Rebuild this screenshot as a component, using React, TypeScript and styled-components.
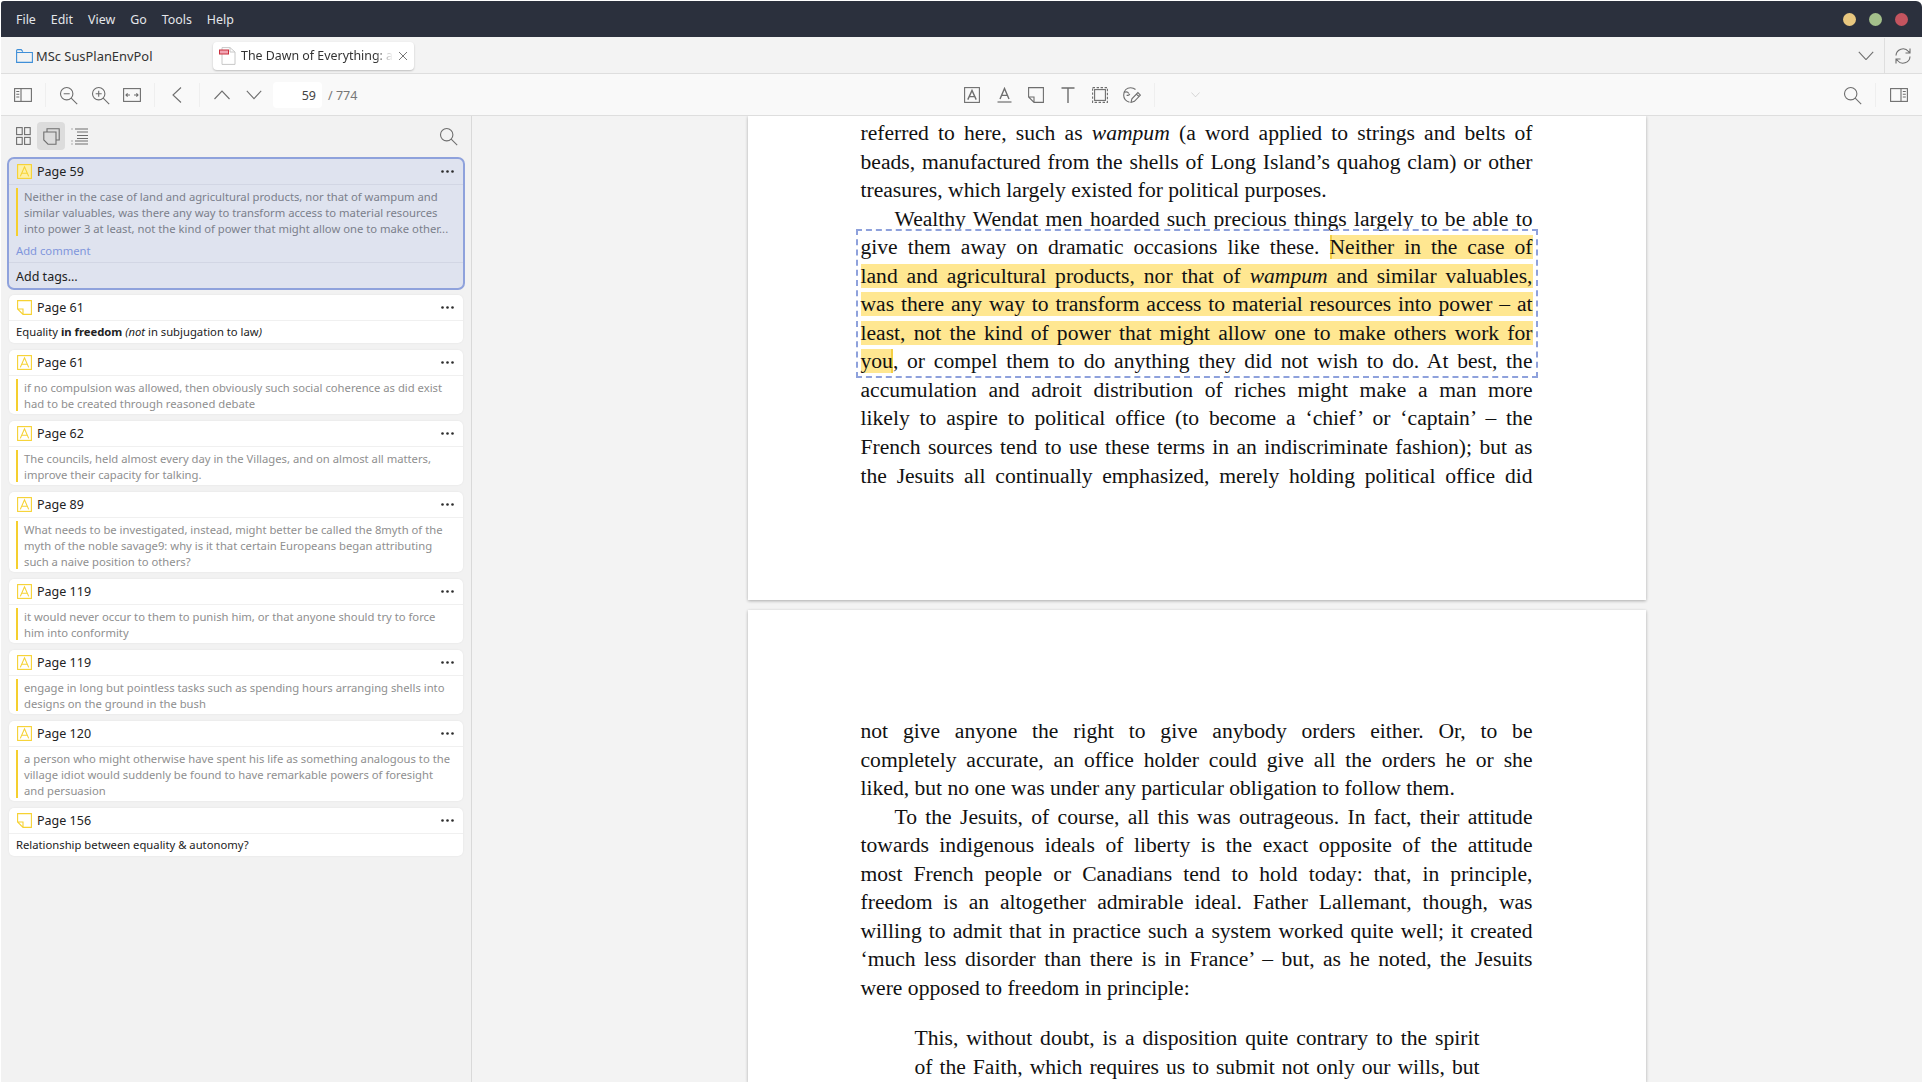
import React from "react";
import styled, { createGlobalStyle } from "styled-components";

const GlobalStyle = createGlobalStyle`
	html, body {
		margin: 0;
		padding: 0;
		height: 100%;
		overflow: hidden;
		background: #fff;
	}
	* {
		box-sizing: border-box;
	}
`;

const Window = styled.div`
	width: 1922px;
	height: 1082px;
	display: flex;
	flex-direction: column;
	padding: 1px 0 0 1px;
	font-family: "Noto Sans", sans-serif;
	color: #222;
	overflow: hidden;
`;

const MenuBar = styled.div`
	height: 36px;
	flex: none;
	display: flex;
	align-items: center;
	justify-content: space-between;
	padding: 0 14px 0 15px;
	background: #2b303d;
	border-radius: 3px 6px 0 0;
`;

const MenuItems = styled.div`
	display: flex;
	gap: 15px;
`;

const MenuItem = styled.span`
	font-size: 12.4px;
	color: #e4e6ea;
`;

const Lights = styled.div`
	display: flex;
	gap: 13px;
`;

const Light = styled.span<{ $color: string }>`
	width: 13px;
	height: 13px;
	border-radius: 50%;
	background: ${p => p.$color};
`;

const TabBar = styled.div`
	height: 37px;
	flex: none;
	display: flex;
	align-items: center;
	padding-top: 1px;
	background: #f3f3f3;
	border-bottom: 1px solid #dedede;
`;

const LibraryTab = styled.div`
	width: 212px;
	flex: none;
	display: flex;
	align-items: center;
	gap: 3px;
	padding-left: 15px;
	font-size: 12.9px;
	color: #333;
`;

const ActiveTab = styled.div`
	width: 201px;
	height: 28px;
	flex: none;
	display: flex;
	align-items: center;
	gap: 5px;
	padding: 0 9px 0 6px;
	background: #fff;
	border-radius: 4px;
	box-shadow: 0 1px 2px rgba(0, 0, 0, 0.22);
	font-size: 12.4px;
	color: #333;
`;

const TabTitle = styled.span`
	flex: 1;
	white-space: nowrap;
	-webkit-mask-image: linear-gradient(to right, #000 88%, transparent 100%);
	mask-image: linear-gradient(to right, #000 88%, transparent 100%);
`;

const TabEnd = styled.div`
	margin-left: auto;
	margin-right: 1px;
	height: 100%;
	display: flex;
	align-items: center;
`;

const TabEndButton = styled.div<{ $divided?: boolean }>`
	width: 37px;
	height: 100%;
	display: flex;
	align-items: center;
	justify-content: center;
	${p => p.$divided && "border-left: 1px solid #dedede;"}
`;

const Toolbar = styled.div`
	height: 42px;
	flex: none;
	display: grid;
	grid-template-columns: 955px auto 1fr;
	align-items: center;
	padding-top: 1px;
	background: #f9f9f9;
	border-bottom: 1px solid #dedede;
`;

const ToolGroup = styled.div<{ $end?: boolean }>`
	display: flex;
	align-items: center;
	${p => (p.$end ? "justify-content: flex-end; padding-right: 7px;" : "")}
`;

const LeftTools = styled(ToolGroup)`
	padding-left: 6px;
`;

const ToolButton = styled.div`
	width: 32px;
	height: 28px;
	display: flex;
	align-items: center;
	justify-content: center;
`;

const ToolSeparator = styled.span`
	width: 1px;
	height: 24px;
	margin: 0 6px;
	background: #efefef;
`;

const RightSeparator = styled(ToolSeparator)`
	margin: 0 7px;
`;

const PageInput = styled.div`
	width: 49px;
	height: 26px;
	margin-left: 3px;
	padding-right: 6px;
	display: flex;
	align-items: center;
	justify-content: flex-end;
	background: #fff;
	border-radius: 4px;
	font-size: 12.5px;
	color: #444;
`;

const PageTotal = styled.span`
	margin-left: 6px;
	font-size: 12.5px;
	color: #777;
`;

const ColorDropdown = styled.div`
	width: 49px;
	display: flex;
	justify-content: flex-end;
	padding-right: 10px;
`;

const Body = styled.div`
	flex: 1;
	min-height: 0;
	display: flex;
`;

const Sidebar = styled.aside`
	width: 471px;
	flex: none;
	padding: 6px 6px 0 6px;
	background: #f2f2f2;
	border-right: 1px solid #d9d9d9;
`;

const SidebarTools = styled.div`
	height: 28px;
	display: flex;
	align-items: center;
	padding-left: 2px;
	margin-bottom: 7px;
`;

const SidebarTool = styled.div<{ $active?: boolean }>`
	width: 28px;
	height: 28px;
	display: flex;
	align-items: center;
	justify-content: center;
	border-radius: 4px;
	background: ${p => (p.$active ? "#dcdcdc" : "transparent")};
`;

const SidebarSearch = styled.div`
	margin-left: auto;
	margin-right: 7px;
	display: flex;
`;

const CardList = styled.div`
	display: flex;
	flex-direction: column;
	gap: 7px;
	padding-bottom: 7px;
`;

const Card = styled.div<{ $selected?: boolean }>`
	background: ${p => (p.$selected ? "#dfe3ef" : "#fff")};
	border-radius: ${p => (p.$selected ? "7px" : "5px")};
	margin: ${p => (p.$selected ? "0 0 -2px" : "0 2px")};
	${p => p.$selected && "border: 2px solid #8fa2dc;"}
	box-shadow: ${p => (p.$selected ? "none" : "0 0 2px rgba(0, 0, 0, 0.08)")};
`;

const CardHeader = styled.div<{ $selected?: boolean }>`
	height: 26px;
	display: flex;
	align-items: center;
	justify-content: space-between;
	padding: 0 9px 0 8px;
	border-bottom: 1px solid ${p => (p.$selected ? "#d2d6e4" : "#f0f0f0")};
	font-size: 12.5px;
	color: #222;
`;

const CardTitle = styled.div`
	display: flex;
	align-items: center;
	gap: 5px;
`;

const Quote = styled.div`
	margin: 3px 9px 3px 7px;
	padding-left: 6px;
	border-left: 2px solid #f5cf2e;
`;

const QuoteLine = styled.div<{ $dark?: boolean }>`
	height: 16px;
	line-height: 17px;
	font-size: 11.25px;
	white-space: nowrap;
	color: ${p => (p.$dark ? "#7b7f8b" : "#8f8f8f")};
`;

const Comment = styled.div`
	height: 22px;
	line-height: 22px;
	padding-left: 7px;
	font-size: 11.25px;
	color: #222;
`;

const AddComment = styled.div`
	height: 23px;
	line-height: 23px;
	padding-left: 7px;
	font-size: 11.25px;
	color: #7f96dc;
`;

const AddTags = styled.div`
	height: 26px;
	line-height: 27px;
	padding-left: 7px;
	border-top: 1px solid #d2d6e4;
	font-size: 12.5px;
	color: #222;
`;

const Viewer = styled.main`
	flex: 1;
	min-width: 0;
	display: flex;
	flex-direction: column;
	align-items: center;
	gap: 10px;
	overflow: hidden;
	background: #f3f3f3;
	padding-right: 1px;
`;

const PdfPage = styled.div<{ $height?: number; $top: number }>`
	width: 898px;
	flex: none;
	height: ${p => (p.$height ? `${p.$height}px` : "auto")};
	padding: ${p => p.$top}px 113px 0;
	background: #fff;
	box-shadow: 0 1px 3px rgba(0, 0, 0, 0.3);
	font-family: "Liberation Serif", serif;
	font-size: 21.6px;
	color: #111;
`;

const TextLine = styled.div<{ $open?: boolean; $indent?: boolean; $inset?: boolean }>`
	height: 28.55px;
	line-height: 28.55px;
	text-align: justify;
	text-align-last: ${p => (p.$open ? "left" : "justify")};
	${p => p.$indent && "padding-left: 34px;"}
	${p => p.$inset && "margin: 0 53px 0 54px;"}
`;

const BlockQuote = styled.div`
	margin-top: 22px;
`;

const Selection = styled.div`
	position: relative;
	&::after {
		content: "";
		position: absolute;
		inset: -4px -5px -2px -5px;
		border: 2px dashed #8ea1dc;
		pointer-events: none;
	}
`;

const Mark = styled.span<{ $start?: boolean; $finish?: boolean }>`
	background: #ffe791;
	${p => p.$start && "box-shadow: inset 2px 0 0 #f3cf45;"}
	${p => p.$finish && "box-shadow: inset -2px 0 0 #f3cf45;"}
`;

const strokeIcon = { fill: "none", stroke: "#6e6e6e", strokeWidth: 1.1 };

const Icon = styled.svg`
	display: block;
	flex: none;
`;

const FolderIcon = () => (
	<Icon width="17" height="14" viewBox="0 0 17 14" fill="none" stroke="#3f8fd8" strokeWidth="1.1">
		<path d="M.6 3.5h15.8v9.9H.6zM.6 3.5V1.6q0-1 1-1h3.6l1.6 2" />
	</Icon>
);

const PdfIcon = () => (
	<Icon width="17" height="18" viewBox="0 0 17 18" fill="none">
		<path d="M3 .6h8l5 4.4v12.4H3z" stroke="#c8c8c8" />
		<path d="M11 .6V5h5" stroke="#c8c8c8" />
		<rect x=".5" y="3" width="9" height="4" fill="#f1a5b3" stroke="#c9303f" />
	</Icon>
);

const CloseIcon = () => (
	<Icon width="10" height="10" viewBox="0 0 10 10" stroke="#777" strokeWidth="1">
		<path d="M1 1l8 8M9 1l-8 8" />
	</Icon>
);

const ChevronDown = ({ size = 16, color = "#6e6e6e" }: { size?: number; color?: string }) => (
	<Icon width={size} height={size * 0.6} viewBox="0 0 16 10" fill="none" stroke={color} strokeWidth="1.1">
		<path d="M.5 1L8 9l7.5-8" />
	</Icon>
);

const ChevronUp = () => (
	<Icon width="16" height="10" viewBox="0 0 16 10" {...strokeIcon}>
		<path d="M.5 9L8 1l7.5 8" />
	</Icon>
);

const ChevronLeft = () => (
	<Icon width="10" height="16" viewBox="0 0 10 16" {...strokeIcon}>
		<path d="M9 .5L1 8l8 7.5" />
	</Icon>
);

const SyncIcon = () => (
	<Icon width="18" height="18" viewBox="0 0 18 18" {...strokeIcon}>
		<path d="M2 8.5A7 7 0 0 1 14.5 4.5L16 6M16 1.5V6h-4.5M16 9.5A7 7 0 0 1 3.5 13.5L2 12M2 16.5V12h4.5" />
	</Icon>
);

const SearchIcon = () => (
	<Icon width="19" height="19" viewBox="0 0 19 19" {...strokeIcon}>
		<circle cx="7.7" cy="7.7" r="6.2" />
		<path d="M12.2 12.2l6 6" />
	</Icon>
);

const ZoomIcon = ({ plus }: { plus?: boolean }) => (
	<Icon width="19" height="19" viewBox="0 0 19 19" {...strokeIcon}>
		<circle cx="7.7" cy="7.7" r="6.2" />
		<path d="M12.2 12.2l6 6M4.7 7.7h6" />
		{plus && <path d="M7.7 4.7v6" />}
	</Icon>
);

const FitWidthIcon = () => (
	<Icon width="18" height="14" viewBox="0 0 18 14" {...strokeIcon}>
		<rect x=".6" y=".6" width="16.8" height="12.8" />
		<path d="M3 7h4M4.6 5.4L3 7l1.6 1.6M15 7h-4M13.4 5.4L15 7l-1.6 1.6" />
	</Icon>
);

const LeftPaneIcon = () => (
	<Icon width="18" height="14" viewBox="0 0 18 14" {...strokeIcon}>
		<rect x=".6" y=".6" width="16.8" height="12.8" />
		<path d="M7 .6v12.8M2.3 3.5h3M2.3 6.2h3M2.3 9h3" />
	</Icon>
);

const RightPaneIcon = () => (
	<Icon width="18" height="14" viewBox="0 0 18 14" {...strokeIcon}>
		<rect x=".6" y=".6" width="16.8" height="12.8" />
		<path d="M11 .6v12.8M12.8 3.5h3M12.8 6.2h3M12.8 9h3" />
	</Icon>
);

const HighlightToolIcon = () => (
	<Icon width="16" height="16" viewBox="0 0 16 16" {...strokeIcon}>
		<rect x=".6" y=".6" width="14.8" height="14.8" />
		<path d="M3.8 12.6L8 3.4l4.2 9.2M5.2 9.6h5.6" strokeWidth="1.4" />
	</Icon>
);

const UnderlineToolIcon = () => (
	<Icon width="15" height="16" viewBox="0 0 15 16" {...strokeIcon}>
		<path d="M3 12L7.5 1.5 12 12M4.6 8.4h5.8" strokeWidth="1.4" />
		<path d="M.5 15h14" strokeWidth="1.2" />
	</Icon>
);

const NoteToolIcon = () => (
	<Icon width="16" height="16" viewBox="0 0 16 16" {...strokeIcon}>
		<path d="M.6.6h14.8v14.8H6L.6 10zM6 15.4V10H.6" />
	</Icon>
);

const TextToolIcon = () => (
	<Icon width="14" height="16" viewBox="0 0 14 16" fill="none" stroke="#6e6e6e" strokeWidth="1.4">
		<path d="M.5 1h13M7 1v15" />
	</Icon>
);

const AreaToolIcon = () => (
	<Icon width="16" height="16" viewBox="0 0 16 16" {...strokeIcon}>
		<rect x="2.6" y="2.6" width="10.8" height="10.8" />
		<rect x=".6" y=".6" width="14.8" height="14.8" strokeDasharray="2.4 1.6" />
	</Icon>
);

const InkToolIcon = () => (
	<Icon width="18" height="16" viewBox="0 0 18 16" {...strokeIcon}>
		<path d="M6.5 15.2C2.5 14 .6 11.2.7 8 .9 3.6 3.8.8 7.5.8c2 0 3.8.6 5 1.7M1.6 5.2c2-.7 3.4-.2 4.2 1.4M3.6 8.2c1.6.4 2.8-.2 3.2-1.4" />
		<path d="M8 15.4l.9-3.6 6-6.2 2.5 2.5-6 6.2zM13.4 7l2.5 2.5" />
	</Icon>
);

const ThumbnailsIcon = () => (
	<Icon width="15" height="18" viewBox="0 0 15 18" {...strokeIcon}>
		<rect x=".6" y=".6" width="5.6" height="7" />
		<rect x="8.6" y=".6" width="5.6" height="7" />
		<rect x=".6" y="10.4" width="5.6" height="7" />
		<rect x="8.6" y="10.4" width="5.6" height="7" />
	</Icon>
);

const AnnotationsIcon = () => (
	<Icon width="17" height="17" viewBox="0 0 17 17" {...strokeIcon}>
		<path d="M4 4V.8h12.2V12H13" />
		<path d="M.8 4h12.2v12.2H5L.8 12z" />
	</Icon>
);

const OutlineIcon = () => (
	<Icon width="17" height="17" viewBox="0 0 17 17" {...strokeIcon}>
		<path d="M4 1h13M6 4h11M6 7.5h11M6 10.5h11M4 13h13M4 16h13M.5 1h1M.5 13h1M.5 16h1" />
	</Icon>
);

const HighlightMark = ({ selected }: { selected?: boolean }) => (
	<Icon width="15" height="15" viewBox="0 0 15 15" fill={selected ? "#fdf0a8" : "none"} stroke="#f6d232" strokeWidth="1.1">
		<rect x=".6" y=".6" width="13.8" height="13.8" />
		<path d="M3.3 12.4L7.5 2.8l4.2 9.6M4.8 9.2h5.4" fill="none" />
	</Icon>
);

const NoteMark = () => (
	<Icon width="15" height="15" viewBox="0 0 15 15" fill="none" stroke="#f6d232" strokeWidth="1.1">
		<path d="M.6.6h13.8v13.8H6L.6 9zM6 14.4V9H.6" />
	</Icon>
);

const MoreDots = () => (
	<Icon width="13" height="3" viewBox="0 0 13 3" fill="#2c2c2c">
		<circle cx="1.5" cy="1.5" r="1.3" />
		<circle cx="6.5" cy="1.5" r="1.3" />
		<circle cx="11.5" cy="1.5" r="1.3" />
	</Icon>
);

type Annotation = {
	page: number;
	note?: boolean;
	selected?: boolean;
	lines?: string[];
	comment?: React.ReactNode;
};

const annotations: Annotation[] = [
	{
		page: 59,
		selected: true,
		lines: [
			"Neither in the case of land and agricultural products, nor that of wampum and",
			"similar valuables, was there any way to transform access to material resources",
			"into power 3 at least, not the kind of power that might allow one to make other...",
		],
	},
	{
		page: 61,
		note: true,
		comment: (
			<>
				Equality <b>in freedom</b> <i>(not</i> in subjugation to law<i>)</i>
			</>
		),
	},
	{
		page: 61,
		lines: [
			"if no compulsion was allowed, then obviously such social coherence as did exist",
			"had to be created through reasoned debate",
		],
	},
	{
		page: 62,
		lines: [
			"The councils, held almost every day in the Villages, and on almost all matters,",
			"improve their capacity for talking.",
		],
	},
	{
		page: 89,
		lines: [
			"What needs to be investigated, instead, might better be called the 8myth of the",
			"myth of the noble savage9: why is it that certain Europeans began attributing",
			"such a naive position to others?",
		],
	},
	{
		page: 119,
		lines: [
			"it would never occur to them to punish him, or that anyone should try to force",
			"him into conformity",
		],
	},
	{
		page: 119,
		lines: [
			"engage in long but pointless tasks such as spending hours arranging shells into",
			"designs on the ground in the bush",
		],
	},
	{
		page: 120,
		lines: [
			"a person who might otherwise have spent his life as something analogous to the",
			"village idiot would suddenly be found to have remarkable powers of foresight",
			"and persuasion",
		],
	},
	{ page: 156, note: true, comment: "Relationship between equality & autonomy?" },
];

const AnnotationCard = ({ item }: { item: Annotation }) => (
	<Card $selected={item.selected}>
		<CardHeader $selected={item.selected}>
			<CardTitle>
				{item.note ? <NoteMark /> : <HighlightMark selected={item.selected} />}
				Page {item.page}
			</CardTitle>
			<MoreDots />
		</CardHeader>
		{item.lines && (
			<Quote>
				{item.lines.map(line => (
					<QuoteLine key={line} $dark={item.selected}>
						{line}
					</QuoteLine>
				))}
			</Quote>
		)}
		{item.comment && <Comment>{item.comment}</Comment>}
		{item.selected && (
			<>
				<AddComment>Add comment</AddComment>
				<AddTags>Add tags…</AddTags>
			</>
		)}
	</Card>
);

const App = () => (
	<Window>
		<GlobalStyle />
		<MenuBar>
			<MenuItems>
				{["File", "Edit", "View", "Go", "Tools", "Help"].map(label => (
					<MenuItem key={label}>{label}</MenuItem>
				))}
			</MenuItems>
			<Lights>
				<Light $color="#e8c77f" />
				<Light $color="#a4c08b" />
				<Light $color="#c4545f" />
			</Lights>
		</MenuBar>

		<TabBar>
			<LibraryTab>
				<FolderIcon />
				MSc SusPlanEnvPol
			</LibraryTab>
			<ActiveTab>
				<PdfIcon />
				<TabTitle>The Dawn of Everything: a</TabTitle>
				<CloseIcon />
			</ActiveTab>
			<TabEnd>
				<TabEndButton>
					<ChevronDown />
				</TabEndButton>
				<TabEndButton $divided>
					<SyncIcon />
				</TabEndButton>
			</TabEnd>
		</TabBar>

		<Toolbar>
			<LeftTools>
				<ToolButton>
					<LeftPaneIcon />
				</ToolButton>
				<ToolSeparator />
				<ToolButton>
					<ZoomIcon />
				</ToolButton>
				<ToolButton>
					<ZoomIcon plus />
				</ToolButton>
				<ToolButton>
					<FitWidthIcon />
				</ToolButton>
				<ToolSeparator />
				<ToolButton>
					<ChevronLeft />
				</ToolButton>
				<ToolSeparator />
				<ToolButton>
					<ChevronUp />
				</ToolButton>
				<ToolButton>
					<ChevronDown />
				</ToolButton>
				<PageInput>59</PageInput>
				<PageTotal>/ 774</PageTotal>
			</LeftTools>
			<ToolGroup>
				<ToolButton>
					<HighlightToolIcon />
				</ToolButton>
				<ToolButton>
					<UnderlineToolIcon />
				</ToolButton>
				<ToolButton>
					<NoteToolIcon />
				</ToolButton>
				<ToolButton>
					<TextToolIcon />
				</ToolButton>
				<ToolButton>
					<AreaToolIcon />
				</ToolButton>
				<ToolButton>
					<InkToolIcon />
				</ToolButton>
				<ToolSeparator />
				<ColorDropdown>
					<ChevronDown size={9} color="#bdbdbd" />
				</ColorDropdown>
			</ToolGroup>
			<ToolGroup $end>
				<ToolButton>
					<SearchIcon />
				</ToolButton>
				<RightSeparator />
				<ToolButton>
					<RightPaneIcon />
				</ToolButton>
			</ToolGroup>
		</Toolbar>

		<Body>
			<Sidebar>
				<SidebarTools>
					<SidebarTool>
						<ThumbnailsIcon />
					</SidebarTool>
					<SidebarTool $active>
						<AnnotationsIcon />
					</SidebarTool>
					<SidebarTool>
						<OutlineIcon />
					</SidebarTool>
					<SidebarSearch>
						<SearchIcon />
					</SidebarSearch>
				</SidebarTools>
				<CardList>
					{annotations.map((item, index) => (
						<AnnotationCard key={index} item={item} />
					))}
				</CardList>
			</Sidebar>

			<Viewer>
				<PdfPage $height={484} $top={3}>
					<TextLine>
						referred to here, such as <i>wampum</i> (a word applied to strings and belts of
					</TextLine>
					<TextLine>beads, manufactured from the shells of Long Island’s quahog clam) or other</TextLine>
					<TextLine $open>treasures, which largely existed for political purposes.</TextLine>
					<TextLine $indent>Wealthy Wendat men hoarded such precious things largely to be able to</TextLine>
					<Selection>
						<TextLine>
							give them away on dramatic occasions like these. <Mark $start>Neither in the case of</Mark>
						</TextLine>
						<TextLine>
							<Mark>
								land and agricultural products, nor that of <i>wampum</i> and similar valuables,
							</Mark>
						</TextLine>
						<TextLine>
							<Mark>was there any way to transform access to material resources into power – at</Mark>
						</TextLine>
						<TextLine>
							<Mark>least, not the kind of power that might allow one to make others work for</Mark>
						</TextLine>
						<TextLine>
							<Mark $finish>you</Mark>, or compel them to do anything they did not wish to do. At best, the
						</TextLine>
					</Selection>
					<TextLine>accumulation and adroit distribution of riches might make a man more</TextLine>
					<TextLine>likely to aspire to political office (to become a ‘chief’ or ‘captain’ – the</TextLine>
					<TextLine>French sources tend to use these terms in an indiscriminate fashion); but as</TextLine>
					<TextLine>the Jesuits all continually emphasized, merely holding political office did</TextLine>
				</PdfPage>
				<PdfPage $top={107}>
					<TextLine>not give anyone the right to give anybody orders either. Or, to be</TextLine>
					<TextLine>completely accurate, an office holder could give all the orders he or she</TextLine>
					<TextLine $open>liked, but no one was under any particular obligation to follow them.</TextLine>
					<TextLine $indent>To the Jesuits, of course, all this was outrageous. In fact, their attitude</TextLine>
					<TextLine>towards indigenous ideals of liberty is the exact opposite of the attitude</TextLine>
					<TextLine>most French people or Canadians tend to hold today: that, in principle,</TextLine>
					<TextLine>freedom is an altogether admirable ideal. Father Lallemant, though, was</TextLine>
					<TextLine>willing to admit that in practice such a system worked quite well; it created</TextLine>
					<TextLine>‘much less disorder than there is in France’ – but, as he noted, the Jesuits</TextLine>
					<TextLine $open>were opposed to freedom in principle:</TextLine>
					<BlockQuote>
						<TextLine $inset>This, without doubt, is a disposition quite contrary to the spirit</TextLine>
						<TextLine $inset>of the Faith, which requires us to submit not only our wills, but</TextLine>
					</BlockQuote>
				</PdfPage>
			</Viewer>
		</Body>
	</Window>
);

export default App;
